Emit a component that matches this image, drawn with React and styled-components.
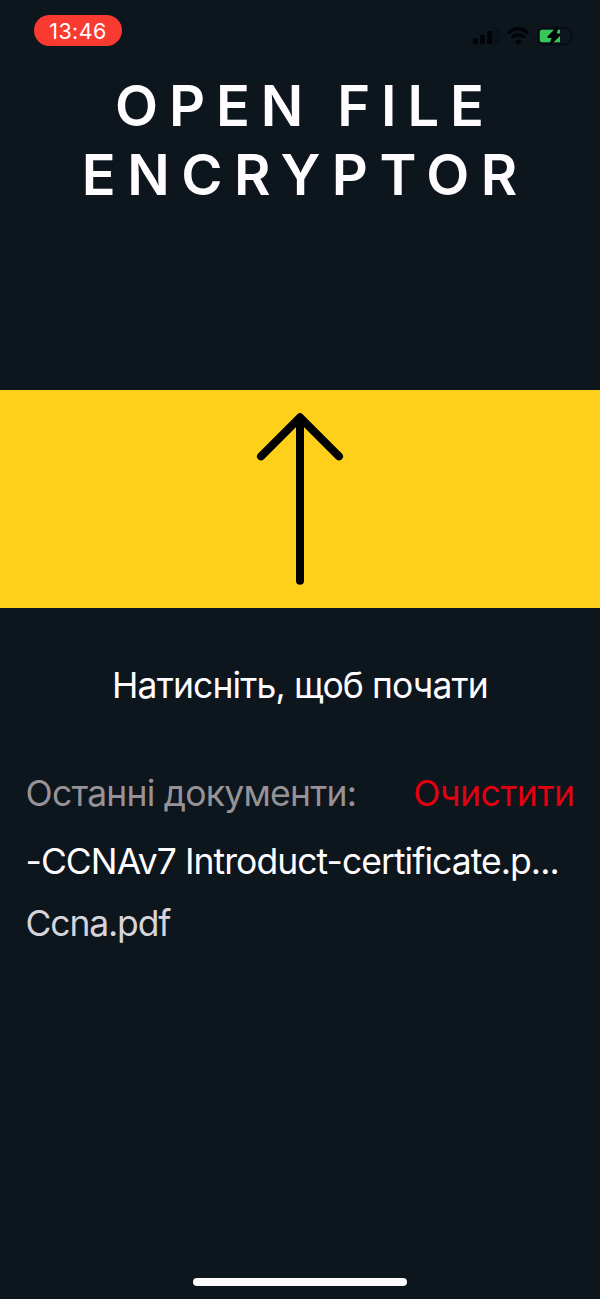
import React from "react";
import styled, { createGlobalStyle } from "styled-components";

const GlobalStyle = createGlobalStyle`
  * { box-sizing: border-box; }
  body { margin: 0; background: #0d151d; }
  button { border: 0; padding: 0; margin: 0; background: none; font: inherit; cursor: pointer; }
`;

const Screen = styled.main`
  display: flex;
  flex-direction: column;
  width: 600px;
  height: 1299px;
  overflow: hidden;
  background: #0d151d;
  color: #fffcff;
  font-family: Inter, "Liberation Sans", sans-serif;
  font-size: 35.5px;
  font-kerning: normal;
`;

const StatusBar = styled.header`
  display: flex;
  justify-content: space-between;
  align-items: flex-start;
  height: 71px;
  padding: 15px 25px 0 34px;
`;

const TimePill = styled.time`
  width: 88px;
  height: 31px;
  border-radius: 16px;
  background: #f83a31;
  color: #fff;
  font-size: 21.5px;
  line-height: 32px;
  letter-spacing: 0.4px;
  text-align: center;
`;

const StatusIcons = styled.svg`
  display: block;
  width: 106px;
  height: 24px;
  margin-top: 9px;
`;

const Title = styled.h1`
  margin: 0;
  height: 319px;
  padding-top: 1px;
  font-size: 56px;
  font-weight: 600;
  line-height: 68.6px;
  text-align: center;
`;

const TitleLine = styled.span`
  display: block;
  white-space: nowrap;
  letter-spacing: ${(p) => p.$spacing}px;
  word-spacing: -2px;
  padding-left: ${(p) => p.$shift}px;
`;

const PickButton = styled.button`
  display: flex;
  justify-content: center;
  height: 218px;
  flex: none;
  background: #ffd01a;
`;

const Hint = styled.p`
  margin: 55px 0 0;
  line-height: 46px;
  text-align: center;
  letter-spacing: ${(p) => p.$spacing}px;
`;

const RecentHeader = styled.div`
  display: flex;
  justify-content: space-between;
  margin-top: 62px;
  padding: 0 25.5px;
  line-height: 46px;
`;

const RecentTitle = styled.span`
  color: #969298;
  letter-spacing: ${(p) => p.$spacing}px;
`;

const ClearButton = styled.button`
  color: #e3000f;
  line-height: 46px;
  letter-spacing: ${(p) => p.$spacing}px;
`;

const FileList = styled.ul`
  list-style: none;
  margin: 14px 0 0;
  padding: 0 25.5px;
`;

const FileItem = styled.li`
  height: 62px;
  line-height: 62px;
  white-space: nowrap;
  color: ${(p) => p.$color};
  letter-spacing: ${(p) => p.$spacing}px;
`;

const HomeIndicator = styled.div`
  width: 214px;
  height: 8px;
  margin: auto auto 13px;
  border-radius: 4px;
  background: #fffcff;
`;

export default function App() {
  return (
    <Screen>
      <GlobalStyle />
      <StatusBar>
        <TimePill>13:46</TimePill>
        <StatusIcons viewBox="469 24 106 24" aria-hidden="true">
          <g fill="#020407">
            <rect x="473" y="38" width="5" height="6" rx="1.3" />
            <rect x="480" y="35" width="5" height="9" rx="1.3" />
            <rect x="487.3" y="31" width="5" height="13" rx="1.3" />
            <rect x="494.5" y="27.5" width="5" height="16.5" rx="1.3" fill="#0a1219" />
            <path d="M514.8 41.4Q518.3 38.2 521.8 41.4L518.3 44.6Z" />
          </g>
          <g fill="none" stroke="#020407" strokeWidth="3.4">
            <path d="M508.2 33.2Q518.3 24.2 528.4 33.2" />
            <path d="M512 37.6Q518.3 32 524.6 37.6" />
          </g>
          <rect x="538" y="28" width="33" height="16.5" rx="5" fill="none" stroke="#070c12" strokeWidth="1.3" />
          <path d="M573 33.5Q575.5 36 573 38.8Z" fill="#070c12" />
          <path d="M542 29.8H560V42.2H542Q539.8 42.2 539.8 40V32Q539.8 29.8 542 29.8Z" fill="#35c759" />
          <path d="M557.5 27.5L548.3 37H552.8L550.5 44L560 34.5H555.5Z" fill="#020407" stroke="#020407" strokeWidth="1.8" strokeLinejoin="round" />
        </StatusIcons>
      </StatusBar>
      <Title>
        <TitleLine $spacing={10.9} $shift={10}>OPEN FILE</TitleLine>
        <TitleLine $spacing={11.5} $shift={10.5}>ENCRYPTOR</TitleLine>
      </Title>
      <PickButton aria-label="Натисніть, щоб почати">
        <svg width="140" height="218" viewBox="230 390 140 218" fill="none" stroke="#000" strokeWidth="8" strokeLinecap="round" strokeLinejoin="round">
          <path d="M300 580.7V417.5M261 456.3L300 417.3L339 456.3" />
        </svg>
      </PickButton>
      <Hint $spacing={-0.87}>Натисніть, щоб почати</Hint>
      <RecentHeader>
        <RecentTitle $spacing={-0.77}>Останні документи:</RecentTitle>
        <ClearButton $spacing={-0.48}>Очистити</ClearButton>
      </RecentHeader>
      <FileList>
        <FileItem $color="#fffcff" $spacing={-0.95}>-CCNAv7 Introduct-certificate.p...</FileItem>
        <FileItem $color="#d6d4da" $spacing={-1.15}>Ccna.pdf</FileItem>
      </FileList>
      <HomeIndicator />
    </Screen>
  );
}
